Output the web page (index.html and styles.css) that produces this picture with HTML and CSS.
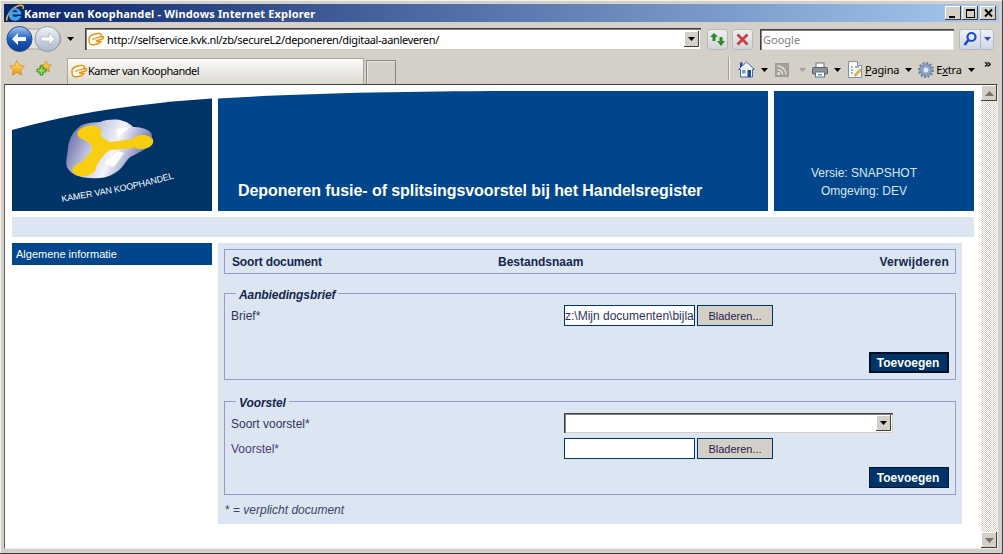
FILE: index.html
```html
<!DOCTYPE html>
<html lang="nl">
<head>
  <meta charset="UTF-8" />
  <title>Kamer van Koophandel - Windows Internet Explorer</title>
  <link rel="stylesheet" href="styles.css">
</head>
<body>
<div class="window">
  <svg width="0" height="0" class="defs">
    <defs>
      <linearGradient id="btnBlue" x1="0" y1="0" x2="0" y2="1"><stop offset="0" stop-color="#a9c8ee"/><stop offset=".5" stop-color="#1f5fc0"/><stop offset="1" stop-color="#0b3a8e"/></linearGradient>
      <linearGradient id="btnGrey" x1="0" y1="0" x2="0" y2="1"><stop offset="0" stop-color="#f2f4f8"/><stop offset="1" stop-color="#a9b6cc"/></linearGradient>
      <linearGradient id="star" x1="0" y1="0" x2="0" y2="1"><stop offset="0" stop-color="#ffe27a"/><stop offset="1" stop-color="#eb9a12"/></linearGradient>
      <linearGradient id="cloud" x1="0" y1="0" x2="1" y2=".3"><stop offset="0" stop-color="#4c5296"/><stop offset=".4" stop-color="#c8cae2"/><stop offset=".65" stop-color="#f4f4fa"/><stop offset="1" stop-color="#7476ae"/></linearGradient>
      <symbol id="siteicon" viewBox="0 0 17 14"><path d="M1 7C1 3 8 1 11.500 1.500c2 .4 2.500 2 1 3.300l2-.3c1.500 0 1.500 2 0 2.500L8 9l5 .5c-2 3-9 4-11 2.500C1 10.800 1 9 1 7z" fill="#fff" stroke="#e8940f" stroke-width="1.500"/><path d="M4 7.500l8-2.500" stroke="#f0a83a" stroke-width="1.600"/></symbol>
      <symbol id="arrowdown" viewBox="0 0 7 4"><path d="M0 0h7L3.500 4z"/></symbol>
    </defs>
  </svg>

  <div class="titlebar">
    <svg class="ie-logo" width="18" height="18" viewBox="0 0 18 18"><path d="M1 16.500C-.5 13 5 4 13 1.500c3.500-1 5 .5 4 3.500" fill="none" stroke="#f4b91c" stroke-width="1.500"/><path d="M2.500 10.500a6.500 6.500 0 0 1 13 0H6.500a2.800 2.800 0 0 0 5 1.500h3.800A6.500 6.500 0 0 1 2.500 10.500zM6.500 8h5a2.600 2.600 0 0 0-5 0z" fill="#3f9fe8" fill-rule="evenodd"/></svg>
    <span class="title-text">Kamer van Koophandel - Windows Internet Explorer</span>
    <div class="winbtns">
      <span class="winbtn"><svg width="15" height="13" viewBox="0 0 15 13"><rect x="3" y="9" width="6" height="2"/></svg></span>
      <span class="winbtn"><svg width="15" height="13" viewBox="0 0 15 13"><path d="M3 2h9v9H3zM4 4v6h7V4z" fill-rule="evenodd"/></svg></span>
      <span class="winbtn winbtn-close"><svg width="15" height="13" viewBox="0 0 15 13"><path d="M4 2.500l7 7M11 2.500l-7 7" stroke="#000" stroke-width="1.800"/></svg></span>
    </div>
  </div>

  <div class="navbar">
    <svg class="navpill" width="56" height="28" viewBox="0 0 56 28">
      <rect x="1" y="4" width="54" height="20" rx="10" fill="#e4e2dc" stroke="#a8a59c"/>
      <circle cx="13.500" cy="14" r="12.500" fill="url(#btnBlue)" stroke="#2a4f90"/>
      <path d="M6 14l6-6v4h8v4h-8v4z" fill="#fff"/>
      <circle cx="41.500" cy="14" r="12.500" fill="url(#btnGrey)" stroke="#8f9cb4"/>
      <path d="M49 14l-6-6v4h-8v4h8v4z" fill="#fff" stroke="#9aa7bd" stroke-width=".6"/>
    </svg>
    <svg class="nav-arrow" width="7" height="4"><use href="#arrowdown"/></svg>
    <div class="addressbox">
      <svg width="17" height="14"><use href="#siteicon"/></svg>
      <span class="url">http://selfservice.kvk.nl/zb/secureL2/deponeren/digitaal-aanleveren/</span>
      <span class="combo-btn"><svg width="7" height="4"><use href="#arrowdown"/></svg></span>
    </div>
    <span class="toolbtn refresh"><svg width="17" height="15" viewBox="0 0 17 15"><path d="M5 1L1 5h2.500v4h3V5H9z" fill="#2c8a2c"/><path d="M12 14l4-5h-2.500V5h-3v4H8z" fill="#2c8a2c"/></svg></span>
    <span class="toolbtn stop"><svg width="13" height="13" viewBox="0 0 13 13"><path d="M1.500 1.500l10 10M11.500 1.500l-10 10" stroke="#c8403c" stroke-width="2.800"/></svg></span>
    <div class="searchbox">Google</div>
    <div class="searchbtn">
      <span class="searchbtn-go"><svg width="16" height="16" viewBox="0 0 16 16"><circle cx="9.500" cy="6" r="4" fill="none" stroke="#1c48c8" stroke-width="2.200"/><path d="M6.500 9l-4 5" stroke="#1c48c8" stroke-width="2.600"/></svg></span>
      <span class="searchbtn-drop"><svg width="7" height="4" fill="#2a50c0"><use href="#arrowdown"/></svg></span>
    </div>
  </div>

  <div class="tabbar">
    <svg class="favstar" width="16" height="16" viewBox="0 0 16 16"><path d="M8 .5l2.300 4.900 5.200.7-3.800 3.700.9 5.300L8 12.500l-4.600 2.600.9-5.300L.5 6.100l5.200-.7z" fill="url(#star)" stroke="#c98a18" stroke-width=".7"/></svg>
    <svg class="addstar" width="16" height="16" viewBox="0 0 16 16"><path d="M10 1l1.700 3.600 3.800.5-2.800 2.700.7 3.800L10 9.700 6.600 11.600l.7-3.800-2.800-2.700 3.800-.5z" fill="url(#star)" stroke="#c98a18" stroke-width=".7"/><path d="M4 6h3v3h3v3H7v3H4v-3H1V9h3z" fill="#8fe04a" stroke="#2c8a2c"/></svg>
    <div class="tab">
      <svg width="17" height="14"><use href="#siteicon"/></svg>
      <span>Kamer van Koophandel</span>
    </div>
    <div class="newtab"></div>
    <div class="cmdbar">
      <span class="cmd-sep"></span>
      <svg class="cmd-home" width="17" height="17" viewBox="0 0 17 17"><path d="M8.500 1L.5 8.500h2V16h12V8.500h2z" fill="#f2f4f8" stroke="#46699c"/><path d="M2 1.500h2.500v3L2 7z" fill="#2a4fa0"/><rect x="9.500" y="9" width="3.500" height="7" fill="#1f4f9c"/><rect x="4" y="9" width="3.500" height="3.500" fill="#6fa0d8"/></svg>
      <svg class="cmd-drop" width="7" height="4"><use href="#arrowdown"/></svg>
      <svg class="cmd-rss" width="14" height="14" viewBox="0 0 14 14"><rect width="14" height="14" rx="1.500" fill="#a3a19c" stroke="#8b8983" stroke-width=".6"/><circle cx="3.500" cy="10.500" r="1.500" fill="#e4e2de"/><path d="M2.500 6.500a5 5 0 0 1 5 5M2.500 3a8.500 8.500 0 0 1 8.500 8.500" fill="none" stroke="#e4e2de" stroke-width="1.500"/></svg>
      <svg class="cmd-drop cmd-drop-off" width="7" height="4"><use href="#arrowdown"/></svg>
      <svg class="cmd-print" width="16" height="16" viewBox="0 0 16 16"><rect x="4" y="1" width="8" height="5" fill="#fff" stroke="#6d7480"/><rect x=".5" y="5.500" width="15" height="6.500" rx="1" fill="#8d949e" stroke="#555c66"/><rect x="3.500" y="10" width="9" height="5" fill="#fff" stroke="#6d7480"/><rect x="6" y="12" width="4" height="1.500" fill="#3f9fd8"/></svg>
      <svg class="cmd-drop" width="7" height="4"><use href="#arrowdown"/></svg>
      <svg class="cmd-page" width="16" height="17" viewBox="0 0 16 17"><path d="M1.500.5h9l4 4v12h-13z" fill="#f8f8f4" stroke="#8b8f98"/><path d="M10.500.5v4h4" fill="#dfe2e8" stroke="#8b8f98"/><path d="M4 6h2M4 9h2M4 12h2M8 6h4" stroke="#4a74b0" stroke-width="1.200"/><path d="M8 13l5-5 1.500 1.500-5 5-2 .5z" fill="#f0c040" stroke="#9a7a20" stroke-width=".5"/></svg>
      <span class="cmd-label cmd-pagina"><u>P</u>agina</span>
      <svg class="cmd-drop" width="7" height="4"><use href="#arrowdown"/></svg>
      <svg class="cmd-gear" width="16" height="16" viewBox="0 0 16 16"><circle cx="8" cy="8" r="5" fill="none" stroke="#7f9cc0" stroke-width="3"/><circle cx="8" cy="8" r="7" fill="none" stroke="#6a7f9c" stroke-width="2" stroke-dasharray="2 1.660"/><circle cx="8" cy="8" r="3" fill="#dfe6f0" stroke="#6a7f9c" stroke-width=".6"/></svg>
      <span class="cmd-label cmd-extra">E<u>x</u>tra</span>
      <svg class="cmd-drop" width="7" height="4"><use href="#arrowdown"/></svg>
      <span class="cmd-more">&raquo;</span>
    </div>
  </div>

  <div class="viewport">
    <div class="page">
      <header class="site-header">
        <div class="logo">
          <svg width="200" height="120" viewBox="0 0 200 120">
            <path d="M0 39C60 22 130 12 200 7.500V120H0z" fill="#003366"/>
            <path d="M66 37C72 31 80 32 88 31C96 28 106 28 111 30C116 31 119 34 121 36C130 36 141 39 140 46C139 53 136 55 133 58C126 63 120 64 116 68C112 74 108 79 103 82C95 87 86 88 78 87C68 87 58 83 55 76C53 70 56 62 56 56C57 49 60 42 66 37z" fill="url(#cloud)"/>
            <path d="M104 38l14-2-12 10zM92 72l14-12 6 2-10 14z" fill="#fff" opacity=".9"/>
            <g fill="#f8cf10">
              <ellipse cx="77.300" cy="41.700" rx="12" ry="7" transform="rotate(-8 77.300 41.700)"/>
              <ellipse cx="130.300" cy="51" rx="11" ry="7" transform="rotate(-4 130.300 51)"/>
              <ellipse cx="72.300" cy="78" rx="12" ry="7" transform="rotate(-10 72.300 78)"/>
              <path d="M71 48Q78 52 80 55Q80 62 76 64L68 74L84 76Q90 64 98 59L122 57V48L98 51Q92 48 87 43z"/>
            </g>
            <path id="logoline" d="M50 111C90 104 130 98 176 83" fill="none"/>
            <text class="logo-text"><textPath href="#logoline">KAMER VAN KOOPHANDEL</textPath></text>
          </svg>
        </div>
        <div class="banner">
          <h1>Deponeren fusie- of splitsingsvoorstel bij het Handelsregister</h1>
        </div>
        <div class="env">
          <p>Versie: SNAPSHOT</p>
          <p>Omgeving: DEV</p>
        </div>
      </header>

      <div class="strip"></div>

      <div class="content">
        <nav class="sidebar">
          <a class="side-item">Algemene informatie</a>
        </nav>
        <main class="main">
          <div class="doc-head">
            <span class="doc-head-first">Soort document</span>
            <span>Bestandsnaam</span>
            <span class="doc-head-end">Verwijderen</span>
          </div>

          <fieldset class="group group-first">
            <legend>Aanbiedingsbrief</legend>
            <div class="form-row first-row">
              <label>Brief*</label>
              <div class="file">
                <input type="text" value="z:\Mijn documenten\bijlage.pdf" />
                <button type="button" class="browse">Bladeren...</button>
              </div>
            </div>
            <div class="actions actions-wide"><button type="button" class="add add-focus">Toevoegen</button></div>
          </fieldset>

          <fieldset class="group group-second">
            <legend>Voorstel</legend>
            <div class="form-row select-row">
              <label>Soort voorstel*</label>
              <div class="selectbox"><span class="combo-btn"><svg width="7" height="4"><use href="#arrowdown"/></svg></span></div>
            </div>
            <div class="form-row file-row">
              <label class="label-purple">Voorstel*</label>
              <div class="file">
                <input type="text" value="" />
                <button type="button" class="browse">Bladeren...</button>
              </div>
            </div>
            <div class="actions"><button type="button" class="add">Toevoegen</button></div>
          </fieldset>

          <p class="note">* = <em>verplicht document</em></p>
        </main>
      </div>
    </div>
    <div class="scrollbar">
      <span class="scroll-btn"><svg width="9" height="5" viewBox="0 0 9 5"><path d="M4.500 0L9 5H0z" fill="#77736a"/></svg></span>
      <span class="scroll-track"></span>
      <span class="scroll-btn"><svg width="9" height="5" viewBox="0 0 9 5"><path d="M0 0h9L4.500 5z" fill="#77736a"/></svg></span>
    </div>
  </div>
</div>
</body>
</html>
```

FILE: styles.css
```css
* { box-sizing: border-box; margin: 0; padding: 0; }
html, body { width: 1003px; height: 554px; overflow: hidden; }
body { font-family: "Liberation Sans", Arial, sans-serif; font-size: 12px; background: #d4d0c8; }
.defs { display: block; height: 0; }
svg { display: block; flex: none; }

/* browser frame */
.window { width: 1003px; height: 554px; display: flex; flex-direction: column; padding: 4px 4px 5px 4px; background: #d4d0c8; box-shadow: inset -1px -1px #404040, inset 1px 1px #f4f3ef; }
.titlebar { height: 18px; flex: none; display: flex; align-items: center; padding: 0 3px 0 2px; background: linear-gradient(to right, #0a246a, #a6caf0); color: #fff; }
.title-text { font: bold 11px "Noto Sans", sans-serif; letter-spacing: .15px; white-space: nowrap; }
.winbtns { margin-left: auto; display: flex; gap: 1px; }
.winbtn { width: 16px; height: 14px; background: #d4d0c8; box-shadow: inset -1px -1px #404040, inset 1px 1px #fff; display: flex; align-items: center; justify-content: center; }
.winbtn-close { margin-left: 1px; }

.navbar { height: 33px; flex: none; display: flex; align-items: center; padding: 1px 0 0 2px; }
.nav-arrow { margin-left: 5px; }
.addressbox { width: 616px; height: 22px; margin-left: 11px; display: flex; align-items: center; padding-left: 3px; background: #fff; box-shadow: inset 1px 1px #404040, inset 2px 2px #808080, inset -1px -1px #d4d0c8; }
.url { margin-left: 2px; font: 11px "Noto Sans", sans-serif; letter-spacing: -.32px; white-space: nowrap; color: #000; }
.combo-btn { margin-left: auto; margin-right: 2px; width: 15px; height: 16px; background: #d4d0c8; box-shadow: inset -1px -1px #404040, inset 1px 1px #fff; display: flex; align-items: center; justify-content: center; }
.toolbtn { width: 21px; height: 21px; display: flex; align-items: center; justify-content: center; border: 1px solid #b4bac4; border-radius: 3px; background: linear-gradient(#eeeff2, #d4d4d8); }
.refresh { margin-left: 6px; }
.stop { margin-left: 4px; }
.searchbox { width: 194px; height: 21px; margin-left: 7px; padding: 3px 0 0 3px; background: #fff; box-shadow: inset 1px 1px #404040, inset 2px 2px #808080, inset -1px -1px #e8e6e0; font: 11px "Noto Sans", sans-serif; color: #7f7f7f; }
.searchbtn { width: 35px; height: 21px; margin-left: 5px; display: flex; border: 1px solid #b4bac4; border-radius: 3px; background: linear-gradient(#eef1f8, #cfd6e6); }
.searchbtn-go { width: 21px; display: flex; align-items: center; justify-content: center; border-right: 1px solid #b4bac4; }
.searchbtn-drop { flex: 1; display: flex; align-items: center; justify-content: center; }

.tabbar { height: 29px; flex: none; display: flex; align-items: flex-end; padding-left: 5px; }
.favstar { align-self: flex-start; margin-top: 5px; }
.addstar { align-self: flex-start; margin: 5px 0 0 11px; }
.tab { width: 297px; height: 26px; margin-left: 15px; display: flex; align-items: center; padding: 0 3px 2px; background: linear-gradient(#fbfbf9, #dcd9d2); border: 1px solid #a8a59c; border-bottom: 0; font: 11px "Noto Sans", sans-serif; letter-spacing: -.48px; }
.newtab { width: 30px; height: 24px; margin-left: 2px; border: 1px solid #8a8780; border-bottom: 0; box-shadow: inset 1px 1px #e8e6e0; }

.cmdbar { flex: 1; align-self: stretch; display: flex; align-items: center; font: 11px "Noto Sans", sans-serif; letter-spacing: -.2px; }
.cmd-sep { width: 2px; height: 23px; margin-left: 332px; background: #f4f3ef; border-left: 1px solid #a09d94; margin-top: -3px; }
.cmd-home { margin-left: 8px; }
.cmd-drop { margin-left: 6px; }
.cmd-drop-off { fill: #a3a19c; margin-left: 10px; }
.cmd-rss { margin-left: 7px; }
.cmd-print { margin-left: 6px; }
.cmd-page { margin-left: 6px; }
.cmd-label { margin-left: 2px; white-space: nowrap; }
.cmd-gear { margin-left: 6px; }
.cmd-more { margin: -12px 0 0 9px; font: bold 12px "DejaVu Sans", sans-serif; }

.viewport { flex: 1; display: flex; margin-right: 1px; background: #fff; border: 1px solid #f0eee8; border-top-color: #404040; border-left-color: #606060; min-height: 0; }
.page { width: 976px; flex: none; padding: 6px 7px 0; background: #fff; }
.scrollbar { width: 16px; flex: none; display: flex; flex-direction: column; }
.scroll-btn { height: 16px; flex: none; background: #d4d0c8; box-shadow: inset -1px -1px #404040, inset 1px 1px #fff; display: flex; align-items: center; justify-content: center; }
.scroll-track { flex: 1; background: repeating-conic-gradient(#d4d0c8 0 25%, #fff 0 50%) 0 0 / 2px 2px; }

/* site header */
.site-header { display: grid; grid-template-columns: 200px 550px 200px; gap: 6px; height: 120px; }
.logo-text { font: 9px "Liberation Sans", sans-serif; fill: #fff; letter-spacing: -.15px; }
.banner { background: #00468c; clip-path: path("M0 7.500C90 2 200 0 330 0L550 0V120H0Z"); display: flex; align-items: flex-end; padding: 0 0 10px 20px; }
.banner h1 { font-size: 16px; font-weight: bold; color: #fff; line-height: 20px; letter-spacing: -.07px; }
.env { background: #00468c; color: #dce6f2; display: flex; flex-direction: column; justify-content: flex-end; align-items: center; padding: 0 20px 11px 0; line-height: 18px; }
.strip { height: 20px; margin-top: 6px; background: #dce6f2; }

/* content */
.content { display: grid; grid-template-columns: 200px 744px; gap: 6px; margin-top: 6px; }
.side-item { display: block; height: 22px; padding: 4px; background: #00468c; color: #fff; font-size: 11px; line-height: 14px; }
.main { height: 281px; padding: 6px; background: #dce6f2; color: #33335c; }
.doc-head { height: 25px; display: grid; grid-template-columns: 266px 1fr auto; align-items: center; padding: 0 6px 0 7px; border: 1px solid #9999cc; font-weight: bold; color: #14264e; }
.doc-head-first { letter-spacing: -.15px; }
.doc-head-end { letter-spacing: .2px; }
.group { border: 1px solid #9999cc; padding: 0 6px 6px; min-width: 0; }
.group-first { margin-top: 13px; }
.group-second { margin-top: 15px; }
.group legend { margin-left: 5px; padding: 0 3px; height: 13px; font-weight: bold; font-style: italic; line-height: 16px; color: #14264e; letter-spacing: -.1px; }
.form-row { display: grid; grid-template-columns: 333px 1fr; align-items: center; }
.first-row { margin-top: 5px; }
.select-row { margin-top: 5px; }
.select-row label { padding-top: 2px; }
.file-row { margin-top: 5px; }
.label-purple { color: #4a3a7c; }
.file { display: flex; gap: 2px; }
.file input { width: 131px; height: 21px; padding: 0; border: 1px solid #003366; background: #fff; font: 12px "Liberation Sans", sans-serif; color: #33335c; outline: 0; }
.browse { width: 76px; height: 21px; border: 1px solid #003366; background: #d4d0c8; font: 11px "Liberation Sans", sans-serif; color: #2a1a4e; }
.selectbox { width: 329px; height: 20px; display: flex; align-items: center; background: #fff; box-shadow: inset 1px 1px #404040, inset 2px 2px #808080, inset -1px -1px #d4d0c8; }
.actions { display: flex; justify-content: flex-end; margin-top: 8px; }
.actions-wide { margin-top: 26px; }
.add { width: 80px; height: 21px; padding-right: 2px; border: 1px solid #00153a; background: #003366; color: #fff; font: bold 12px "Liberation Sans", sans-serif; }
.add-focus { border-width: 2px; border-color: #000e28; }
.note { margin: 8px 0 0 1px; line-height: 14px; color: #3d4466; }
```
